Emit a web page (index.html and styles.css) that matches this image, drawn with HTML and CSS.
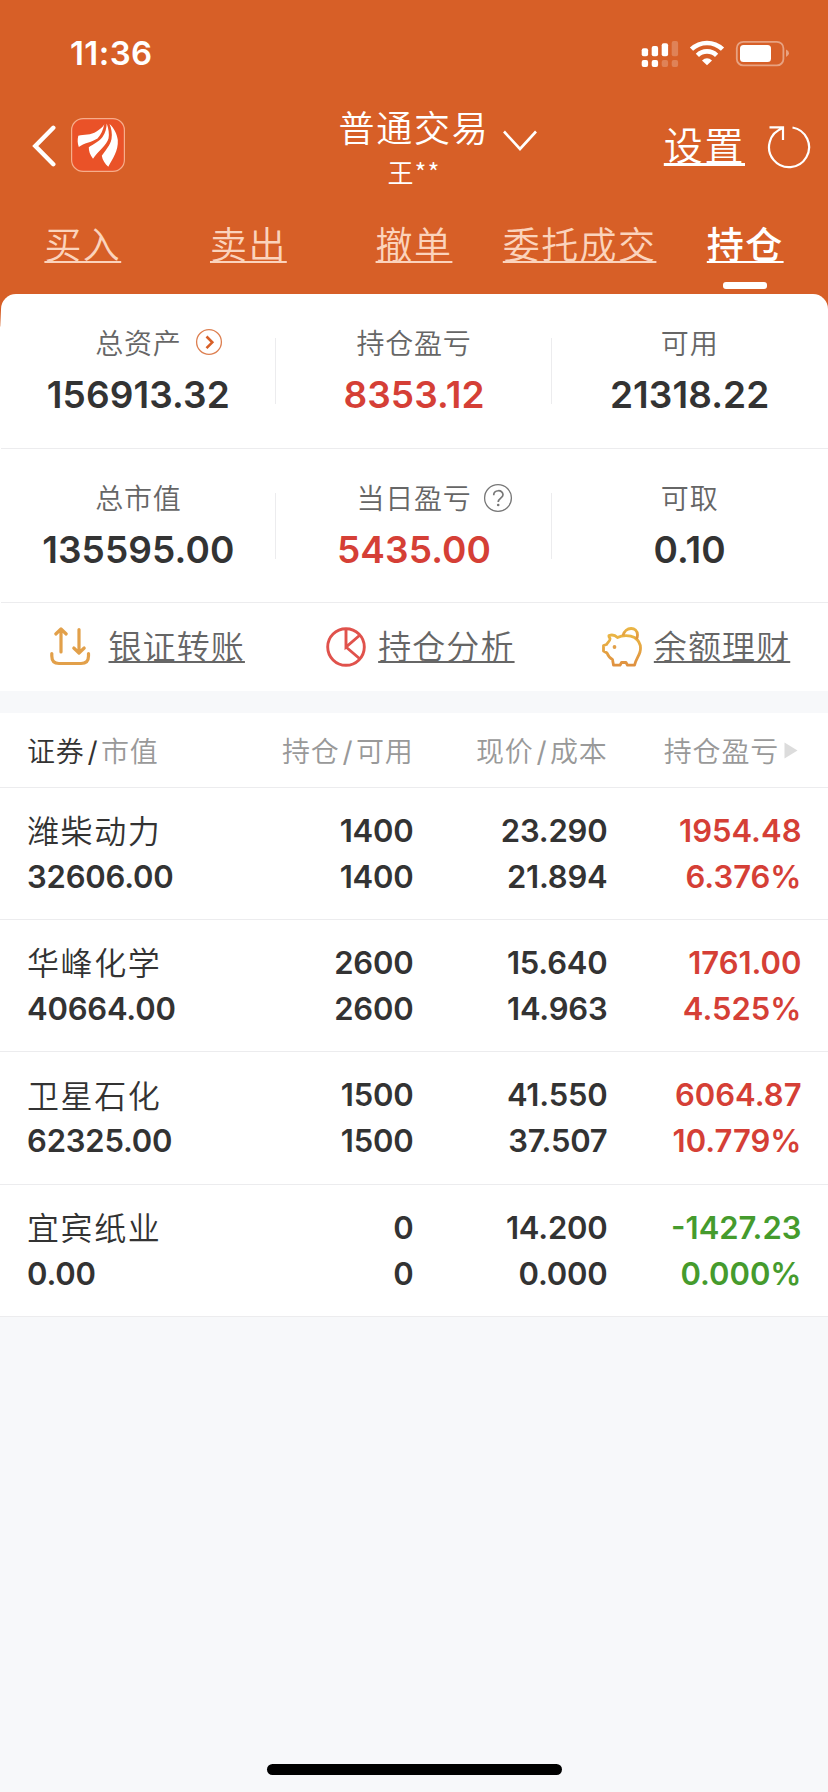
FILE: index.html
```html
<!DOCTYPE html>
<html lang="zh-CN">
<head>
<meta charset="utf-8">
<title>持仓</title>
<link rel="stylesheet" href="styles.css">
</head>
<body>
<div class="screen">
  <header class="header">
    <div class="status">
      <span class="status-time">11:36</span>
      <svg class="status-icons" width="150" height="28" viewBox="640 38 150 28">
        <g fill="#fff">
          <rect x="641.7" y="47.3" width="6.4" height="8" rx="2"/>
          <rect x="651.7" y="45" width="6.4" height="10.3" rx="2"/>
          <rect x="661.7" y="42.3" width="6.4" height="13" rx="2"/>
          <rect x="641.7" y="59" width="6.4" height="7" rx="2"/>
          <rect x="651.7" y="59" width="6.4" height="7" rx="2"/>
          <g opacity=".22">
            <rect x="671.7" y="40" width="6.4" height="15.3" rx="2"/>
            <rect x="661.7" y="59" width="6.4" height="7" rx="2"/>
            <rect x="671.7" y="59" width="6.4" height="7" rx="2"/>
          </g>
          <path d="M707 64.3l-5-4.9q5-4.3 10 0z"/>
          <rect x="740" y="44" width="31" height="17" rx="3.5"/>
        </g>
        <g fill="none" stroke="#fff" stroke-width="4.6">
          <path d="M691.5 48.2a22.3 22.3 0 0 1 31 0"/>
          <path d="M697.4 54.3a13.8 13.8 0 0 1 19.2 0"/>
        </g>
        <rect x="736.8" y="40.8" width="46.6" height="23.6" rx="6.5" fill="none" stroke="#fff" stroke-width="1.8" opacity=".42"/>
        <path d="M786 48.6q3 1.2 3 3.7t-3 3.7z" fill="#fff" opacity=".42"/>
      </svg>
    </div>
    <div class="nav">
      <div class="nav-left">
        <svg width="24" height="42" viewBox="32 124.5 24 42"><path d="M53.3 127.3L35.3 145.5L53.3 163.7" fill="none" stroke="#fff" stroke-width="4.4" stroke-linecap="round" stroke-linejoin="miter"/></svg>
        <svg class="logo" width="54" height="54" viewBox="0 0 54 54">
          <rect x=".6" y=".6" width="52.8" height="52.8" rx="11.5" fill="#ea5228" stroke="#f6ad8b" stroke-width="1.2"/>
          <g fill="#fff">
            <path d="M33.3 6.3C32 12 30 17 26.5 20.5C20 24.5 13 25 7.8 29C6.5 25.5 6.3 21.5 7.3 17.7C13 16 20 17.5 25.5 13.5C29 11 32 9 33.3 6.3z"/>
            <path d="M35.7 5.5C37.5 10.5 38.5 16 37.5 20.5C36 26.5 27 33.5 22 40.7C19 37 17.7 33 17.8 29.3C22.5 26 28.5 23.5 31.5 19C34.5 15 35.5 10 35.7 5.5z"/>
            <path d="M38.5 6C43 10 46 16 46.8 22C47.5 33 41.5 41 37.3 48.7C34 46 31.5 42 30.8 37.7C34 33 39.5 27 40.5 21C41.5 15.5 40.3 10 38.5 6z"/>
          </g>
        </svg>
      </div>
      <div class="nav-title">
        <div class="title">普通交易
          <svg class="title-arrow" width="36" height="22" viewBox="0 0 36 22"><path d="M2 1.5L18 19L34 1.5" fill="none" stroke="#fff" stroke-width="2.6"/></svg>
        </div>
        <div class="account">王**</div>
      </div>
      <div class="nav-right">
        <a class="settings">设置</a>
        <svg width="46" height="46" viewBox="765 122 46 46"><path d="M792.5 126.5A20 20 0 1 1 782.5 127.3M769.5 126.3H783V139" fill="none" stroke="#fff" stroke-width="2.2"/></svg>
      </div>
    </div>
    <nav class="tabs">
      <a class="tab">买入</a>
      <a class="tab">卖出</a>
      <a class="tab">撤单</a>
      <a class="tab">委托成交</a>
      <a class="tab active">持仓</a>
    </nav>
  </header>

  <div class="card-wrap">
    <section class="card">
      <div class="stats">
        <div class="stat"><div class="label">总资产<svg class="badge badge-go" width="28" height="28" viewBox="0 0 28 28"><circle cx="14" cy="14" r="12.4" fill="none" stroke="#dd7f50" stroke-width="1.3"/><path d="M11.5 8.5L17.3 14.3L11.5 20.1" fill="none" stroke="#d75f27" stroke-width="2.6"/></svg></div><div class="value">156913.32</div></div>
        <div class="stat"><div class="label">持仓盈亏</div><div class="value red">8353.12</div></div>
        <div class="stat"><div class="label">可用</div><div class="value">21318.22</div></div>
      </div>
      <div class="stats">
        <div class="stat"><div class="label">总市值</div><div class="value">135595.00</div></div>
        <div class="stat"><div class="label">当日盈亏<svg class="badge badge-help" width="30" height="30" viewBox="0 0 30 30"><g fill="none" stroke="#777" stroke-width="1.3"><circle cx="15" cy="15" r="13.4"/><path d="M10.7 12.2C10.7 6.3 20 6.3 20 11.8C20 15 15.2 15.4 15.2 19" stroke-width="1.7"/></g><circle cx="15.2" cy="22" r="1.3" fill="#777"/></svg></div><div class="value red">5435.00</div></div>
        <div class="stat"><div class="label">可取</div><div class="value">0.10</div></div>
      </div>
      <div class="actions">
        <a class="action">
          <svg width="42" height="42" viewBox="50 626 42 42"><g fill="none" stroke="#e2a04a" stroke-width="3.2" stroke-linecap="round" stroke-linejoin="round"><path d="M61 652V629.5M55.8 634L61 629L66.2 634"/><path d="M79 629.5V652.5M73.800 648L79 653L84.2 648"/><path d="M51.800 653.5V656Q51.800 663.5 59 663.5H81Q88.500 663.5 88.500 656V653.5"/></g></svg>
          <span class="action-text first">银证转账</span>
        </a>
        <a class="action">
          <svg width="42" height="42" viewBox="324.5 626 42 42"><g fill="none" stroke="#e0524c" stroke-width="2.9"><circle cx="345.5" cy="647" r="18.3"/><path d="M345.5 628.5V647L359.5 635M345.5 647L359.5 659"/></g></svg>
          <span class="action-text">持仓分析</span>
        </a>
        <a class="action">
          <svg width="42" height="42" viewBox="600 626 42 42"><g fill="none" stroke="url(#pig)" stroke-width="2.8" stroke-linejoin="round"><path d="M608 635.5C611 634.5 614.5 635.5 616.5 637.5C621 635 629 635 633.5 637.5C638.5 641 640.5 646 639 652C637.5 657 634.5 660 633.5 665.2H626.5L625 662.5H620.5L619 665.2H612.5L611.5 659.5C608.5 658 607 655.5 606 653L602.5 651V645.5L605.5 644.5C607 642 609.5 640.5 609 638.5C608.7 637.5 607.5 637 608 635.5z"/><path d="M622 635.5C624 626.5 636.5 626 636.5 635Q636.5 637.5 635.3 639"/></g><circle cx="613.5" cy="647" r="1.9" fill="#e2a04a"/><defs><linearGradient id="pig" x1="0" y1="0" x2="0" y2="1"><stop offset="0" stop-color="#eab544"/><stop offset="1" stop-color="#df9140"/></linearGradient></defs></svg>
          <span class="action-text">余额理财</span>
        </a>
      </div>
    </section>
  </div>

  <section class="table">
    <div class="row thead">
      <div class="c1"><span class="dark">证券<i class="slash">/</i></span>市值</div>
      <div class="cell">持仓<i class="slash">/</i>可用</div>
      <div class="cell">现价<i class="slash">/</i>成本</div>
      <div class="cell last"><span>持仓盈亏</span><svg width="14" height="17" viewBox="0 0 14 17"><path d="M.5 .5L13.500 8.500L.5 16.500z" fill="#dcdcdc"/></svg></div>
    </div>
    <div class="row">
      <div class="c1"><div class="name">潍柴动力</div><div>32606.00</div></div>
      <div class="cell"><div>1400</div><div>1400</div></div>
      <div class="cell"><div>23.290</div><div>21.894</div></div>
      <div class="cell red"><div>1954.48</div><div>6.376%</div></div>
    </div>
    <div class="row">
      <div class="c1"><div class="name">华峰化学</div><div>40664.00</div></div>
      <div class="cell"><div>2600</div><div>2600</div></div>
      <div class="cell"><div>15.640</div><div>14.963</div></div>
      <div class="cell red"><div>1761.00</div><div>4.525%</div></div>
    </div>
    <div class="row">
      <div class="c1"><div class="name">卫星石化</div><div>62325.00</div></div>
      <div class="cell"><div>1500</div><div>1500</div></div>
      <div class="cell"><div>41.550</div><div>37.507</div></div>
      <div class="cell red"><div>6064.87</div><div>10.779%</div></div>
    </div>
    <div class="row">
      <div class="c1"><div class="name">宜宾纸业</div><div>0.00</div></div>
      <div class="cell"><div>0</div><div>0</div></div>
      <div class="cell"><div>14.200</div><div>0.000</div></div>
      <div class="cell green"><div>-1427.23</div><div>0.000%</div></div>
    </div>
  </section>
  <div class="home"></div>
</div>
</body>
</html>
```
FILE: styles.css
```css
* { box-sizing: border-box; }
body {
  margin: 0;
  background: #f7f8fa;
  font-family: "Noto Sans CJK SC", sans-serif;
  font-weight: 350;
  color: #333;
}
svg { display: block; flex: none; }
.screen {
  position: relative;
  width: 828px;
  height: 1792px;
  display: flex;
  flex-direction: column;
  overflow: hidden;
}
.header { height: 294px; background: #d75f27; color: #fff; flex: none; }
.status {
  height: 88px;
  padding: 17px 38px 0 70px;
  display: flex;
  justify-content: space-between;
  align-items: center;
}
.status-time { font: 600 33px/40px Inter, sans-serif; letter-spacing: .4px; }
.nav { height: 115px; display: grid; grid-template-columns: 1fr auto 1fr; align-items: center; }
.nav-left { display: flex; align-items: center; gap: 15px; padding-left: 32px; }
.logo { margin-bottom: 1px; }
.nav-title { text-align: center; padding-top: 6px; }
.title { position: relative; font-size: 36px; line-height: 46px; letter-spacing: 1.7px; }
.title-arrow { position: absolute; left: calc(100% + 13px); top: 27px; }
.account { font-size: 26px; line-height: 46px; letter-spacing: 1px; }
.nav-right { display: flex; justify-content: flex-end; align-items: center; gap: 20px; padding-right: 17px; }
.settings {
  font-size: 39px;
  line-height: 50px;
  letter-spacing: 1.6px;
  padding-bottom: 5px;
  text-decoration: underline;
  text-decoration-thickness: 2.5px;
  text-decoration-skip-ink: none;
  text-underline-offset: 3px;
}
.tabs { height: 91px; display: grid; grid-template-columns: repeat(5, 1fr); justify-items: center; }
.tab {
  position: relative;
  font-size: 37px;
  line-height: 50px;
  padding-top: 15px;
  letter-spacing: 1.4px;
  color: #fbd3bc;
  text-decoration: underline;
  text-decoration-thickness: 2px;
  text-decoration-skip-ink: none;
  text-underline-offset: 2px;
}
.tab.active { color: #fff; font-weight: 500; }
.tab.active::after {
  content: "";
  position: absolute;
  left: calc(50% - 22px);
  top: 79px;
  width: 44px;
  height: 7px;
  border-radius: 3px;
  background: #fff;
}
.card-wrap { flex: none; background: linear-gradient(#d75f27 16px, #f3d5c6 32px, #fff 33px); }
.card { background: #fff; margin: 0 .5px; border-radius: 15px 15px 0 0; }
.stats { height: 154.5px; display: grid; grid-template-columns: repeat(3, 1fr); border-bottom: 1.5px solid #ececee; }
.stat {
  padding-top: 28px;
  text-align: center;
  background: linear-gradient(#ececee, #ececee) right 44px / 1px 66px no-repeat;
}
.stat:last-child { background: none; }
.label { position: relative; font-size: 28px; line-height: 40px; letter-spacing: .8px; color: #666; }
.badge { position: absolute; top: 6px; }
.badge-go { left: 194.5px; }
.badge-help { left: 207px; }
.value { font: 600 37px/46px Inter, sans-serif; margin-top: 10px; letter-spacing: .1px; }
.red { color: #d53f36; }
.green { color: #459b2d; }
.actions { height: 88px; display: grid; grid-template-columns: repeat(3, 1fr); }
.action { display: flex; align-items: center; padding-left: 49px; gap: 11px; }
.action-text {
  font-size: 33px;
  line-height: 46px;
  letter-spacing: 1.1px;
  padding-bottom: 4px;
  color: #666;
  text-decoration: underline;
  text-decoration-thickness: 2px;
  text-decoration-skip-ink: none;
  text-underline-offset: 2px;
}
.action-text.first { margin-left: 6px; }
.table { margin-top: 22px; background: #fff; flex: none; }
.row {
  height: 132.4px;
  display: grid;
  grid-template-columns: 214.5px 172px 194px 194px;
  padding: 20px 26.5px 0 27px;
  border-bottom: 1px solid #ececee;
  font: 600 31px/46px Inter, sans-serif;
  letter-spacing: -.2px;
}
.cell { text-align: right; }
.cell.red, .cell.green { letter-spacing: 0; }
.name { margin: -1.5px 0 1.5px; font-family: "Noto Sans CJK SC", sans-serif; font-weight: 350; font-size: 32px; letter-spacing: 1.6px; }
.thead { height: 74.5px; padding-top: 17px; font: 350 28px/40px "Noto Sans CJK SC", sans-serif; letter-spacing: .8px; color: #999; }
.dark { color: #333; }
.slash { font-style: normal; font-family: Inter, sans-serif; font-weight: 400; padding: 0 2.5px 0 3px; }
.cell.last { display: flex; justify-content: flex-end; align-items: center; gap: 5px; height: 40px; padding-right: 3.5px; letter-spacing: .8px; }
.home { position: absolute; left: 267px; top: 1764px; width: 295px; height: 11px; border-radius: 6px; background: #000; }
```
